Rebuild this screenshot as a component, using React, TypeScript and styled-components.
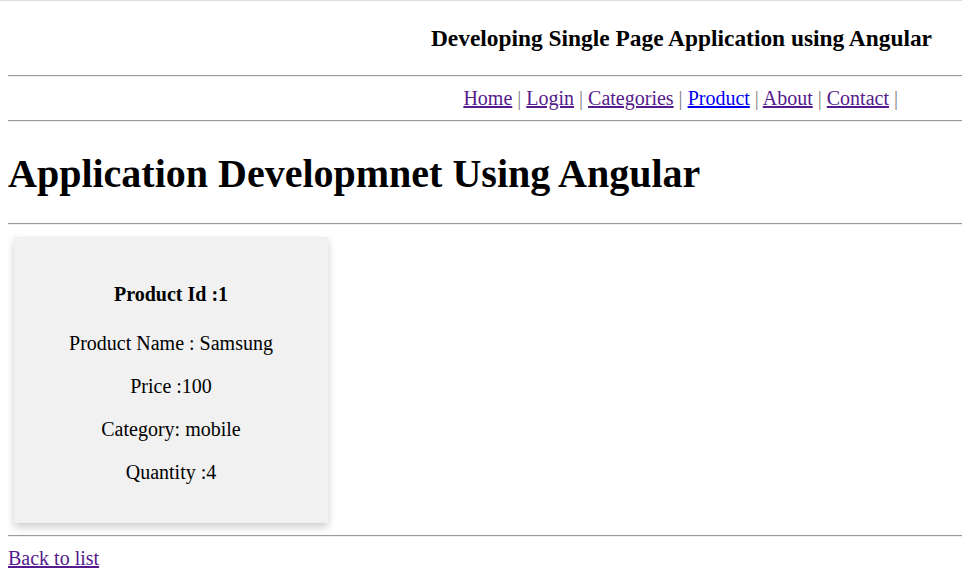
import React from 'react';
import styled, { createGlobalStyle } from 'styled-components';

const GlobalStyle = createGlobalStyle`
  html {
    border-top: 1px solid #dddddd;
  }
  body {
    margin: 0 0 0 8px;
    font-family: "Liberation Serif", "Times New Roman", serif;
    color: #000;
    background: #fff;
  }
`;

const Header = styled.header`
  padding: 23px 30px 23px 0;
  text-align: right;
  font-size: 23.4px;
  line-height: 28px;
  font-weight: bold;
`;

const Rule = styled.hr`
  margin: 0;
  height: 0;
  border: 0;
  border-top: 1px solid #9a9a9a;
  border-bottom: 1px solid #eeeeee;
`;

const Nav = styled.nav`
  padding: 10px 64px 10px 0;
  text-align: right;
  font-size: 20px;
  line-height: 23px;
`;

const NavLink = styled.a<{ $visited?: boolean }>`
  color: ${(p) => (p.$visited ? '#551a8b' : '#0000ee')};
  text-decoration: underline;
`;

const Sep = styled.span`
  color: #808080;
`;

const Title = styled.h1`
  margin: 29px 0 26px;
  font-size: 40px;
  line-height: 46px;
  font-weight: bold;
`;

const Card = styled.div`
  width: 314px;
  height: 286px;
  box-sizing: border-box;
  margin: 12px 6px;
  padding-top: 46px;
  background: #f1f1f1;
  box-shadow: 0 4px 8px 0 rgba(0, 0, 0, 0.2);
  text-align: center;
`;

const CardTitle = styled.h3`
  margin: 0 0 26px;
  font-size: 20px;
  line-height: 23px;
  font-weight: bold;
`;

const Field = styled.p`
  margin: 0 0 20px;
  font-size: 20px;
  line-height: 23px;
`;

const Back = styled.a`
  display: inline-block;
  margin-top: 10px;
  font-size: 20px;
  line-height: 23px;
  color: #551a8b;
  text-decoration: underline;
`;

const links = [
  { label: 'Home', visited: true },
  { label: 'Login', visited: true },
  { label: 'Categories', visited: true },
  { label: 'Product', visited: false },
  { label: 'About', visited: true },
  { label: 'Contact', visited: true },
];

const App = (): React.ReactElement => (
  <>
    <GlobalStyle />
    <Header>Developing Single Page Application using Angular</Header>
    <Rule />
    <Nav>
      {links.map((l) => (
        <React.Fragment key={l.label}>
          <NavLink href="#" $visited={l.visited}>
            {l.label}
          </NavLink>
          <Sep> | </Sep>
        </React.Fragment>
      ))}
    </Nav>
    <Rule />
    <Title>Application Developmnet Using Angular</Title>
    <Rule />
    <Card>
      <CardTitle>Product Id :1</CardTitle>
      <Field>Product Name : Samsung</Field>
      <Field>Price :100</Field>
      <Field>Category: mobile</Field>
      <Field>Quantity :4</Field>
    </Card>
    <Rule />
    <Back href="#">Back to list</Back>
  </>
);

export default App;
